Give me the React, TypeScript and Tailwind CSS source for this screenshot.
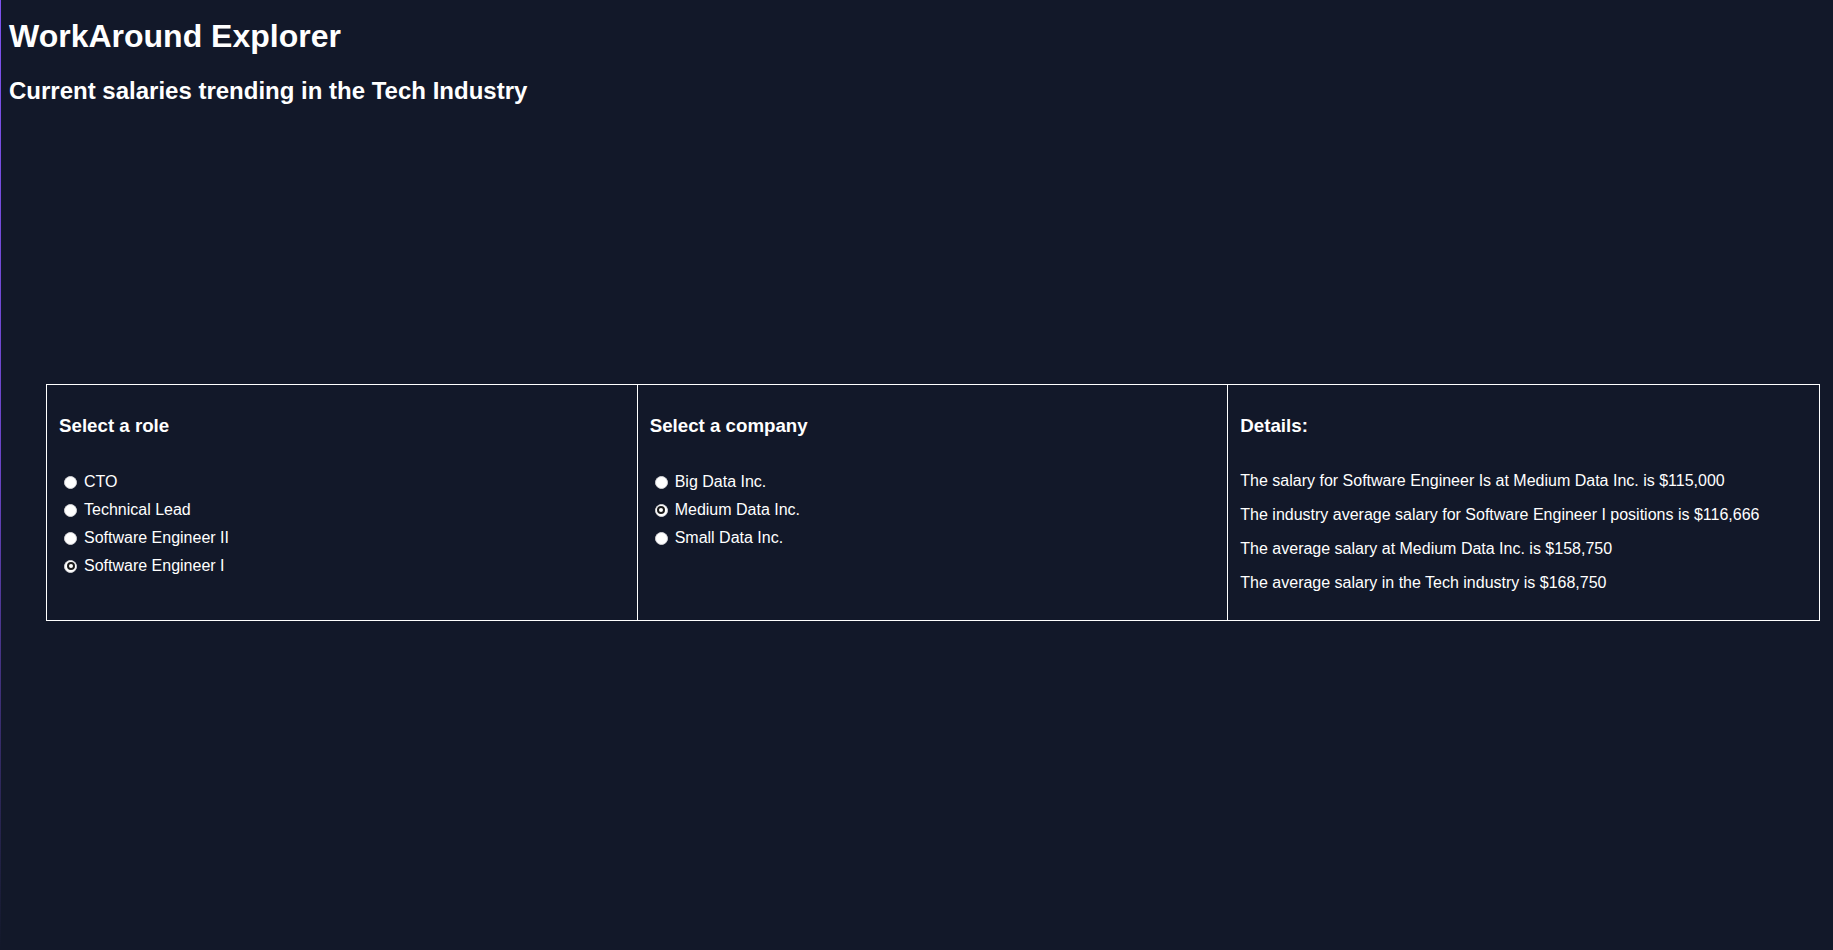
import { useState } from 'react';

const roles = ['CTO', 'Technical Lead', 'Software Engineer II', 'Software Engineer I'];
const companies = ['Big Data Inc.', 'Medium Data Inc.', 'Small Data Inc.'];

function Radio({ label, checked, onSelect }) {
  return (
    <label className="flex items-center h-[28px] cursor-pointer" onClick={onSelect}>
      <span className="ml-[5px] mr-[7px] w-[13px] h-[13px] rounded-full bg-white border border-[#d4d4d8] flex items-center justify-center shrink-0">
        {checked && <span className="w-[8px] h-[8px] rounded-full border-2 border-[#1b1b1b] bg-white" />}
      </span>
      <span className="text-[16px] leading-[18px]">{label}</span>
    </label>
  );
}

export default function App() {
  const [role, setRole] = useState('Software Engineer I');
  const [company, setCompany] = useState('Medium Data Inc.');

  return (
    <div className="min-h-screen w-full flex bg-[#121829] text-white font-['Liberation_Sans',Arial,sans-serif]">
      {/* left accent line */}
      <div className="w-px shrink-0 bg-gradient-to-b from-[#7e52ee] via-[#6a44c4] to-[#121829]" />

      <div className="flex-1 flex flex-col">
        <div className="px-[8px] pt-[18px]">
          <h1 className="text-[32px] leading-[37px] font-bold">WorkAround Explorer</h1>
          <h2 className="mt-[22px] text-[24px] leading-[28px] font-bold">Current salaries trending in the Tech Industry</h2>
        </div>

        <div className="mt-[279px] ml-[45px] mr-[13px] grid grid-cols-3 border border-white divide-x divide-white">
          {/* Roles */}
          <div className="px-3 pt-3 pb-[28px]">
            <h3 className="mt-[18px] text-[18.72px] leading-[22px] font-bold">Select a role</h3>
            <div className="mt-[31px] flex flex-col">
              {roles.map(r => (
                <Radio key={r} label={r} checked={role === r} onSelect={() => setRole(r)} />
              ))}
            </div>
          </div>

          {/* Companies */}
          <div className="px-3 pt-3 pb-[28px]">
            <h3 className="mt-[18px] text-[18.72px] leading-[22px] font-bold">Select a company</h3>
            <div className="mt-[31px] flex flex-col">
              {companies.map(c => (
                <Radio key={c} label={c} checked={company === c} onSelect={() => setCompany(c)} />
              ))}
            </div>
          </div>

          {/* Details */}
          <div className="px-3 pt-3 pb-[28px]">
            <h3 className="mt-[18px] text-[18.72px] leading-[22px] font-bold">Details:</h3>
            <div className="mt-[35px] flex flex-col gap-4 text-[16px] leading-[18px]">
              <p>The salary for Software Engineer Is at Medium Data Inc. is $115,000</p>
              <p>The industry average salary for Software Engineer I positions is $116,666</p>
              <p>The average salary at Medium Data Inc. is $158,750</p>
              <p>The average salary in the Tech industry is $168,750</p>
            </div>
          </div>
        </div>
      </div>
    </div>
  );
}
